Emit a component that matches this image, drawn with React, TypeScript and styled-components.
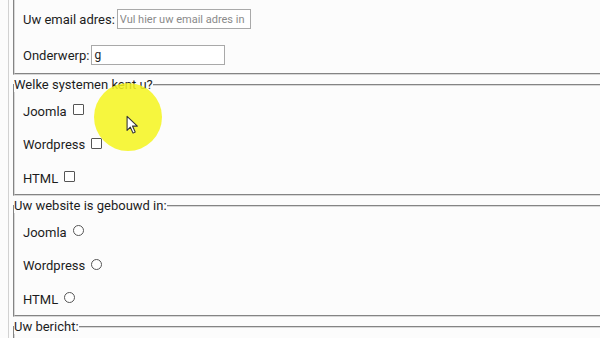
import React from 'react';
import styled, { createGlobalStyle } from 'styled-components';

const GlobalStyle = createGlobalStyle`
  html, body {
    margin: 0;
    padding: 0;
    background: #fcfcfc;
    overflow: hidden;
  }
  body {
    font-family: Roboto, "Liberation Sans", sans-serif;
    font-size: 13px;
    color: #1c1c1c;
  }
`;

const Page = styled.div`
  position: relative;
  width: 600px;
  height: 338px;
  overflow: hidden;
  padding-left: 8px;
  box-sizing: border-box;
`;

const Form = styled.form`
  border-left: 1px solid #d2d2d2;
  padding-left: 4px;
  height: 100%;
  display: flex;
  flex-direction: column;
  gap: 2px;
`;

const TopSection = styled.div`
  border: 2px groove #d8d8d8;
  border-top: none;
  border-right: none;
  padding: 9px 0 8px 8px;
  display: flex;
  flex-direction: column;
  gap: 16px;
`;

const Fieldset = styled.fieldset`
  margin: 0;
  padding: 0;
  border: 2px groove #d8d8d8;
  border-right: none;
  min-width: 0;
  flex-shrink: 0;
`;

const Legend = styled.legend`
  padding: 0;
  margin-left: -1px;
  line-height: 15px;
`;

const Rows = styled.div`
  display: flex;
  flex-direction: column;
  gap: 13.5px;
  padding: 9px 0 6px 8px;
`;

const Row = styled.label`
  display: flex;
  align-items: center;
  height: 20px;
  gap: 6px;
`;

const TextRow = styled(Row)`
  gap: 2px;
`;

const TextInput = styled.input`
  width: 134px;
  height: 20px;
  box-sizing: border-box;
  border: 1px solid #a9a9a9;
  padding: 0 2px;
  font-family: Roboto, "Liberation Sans", sans-serif;
  font-size: 12px;
  color: #222;
  background: #fff;
  outline: none;
  &::placeholder {
    color: #8a8a8a;
    font-size: 11px;
  }
`;

type BoxProps = { $round?: boolean };

const Choice = styled.input<BoxProps>`
  appearance: none;
  margin: 0;
  width: 11px;
  height: 11px;
  box-sizing: border-box;
  border: 1px solid #555;
  border-radius: ${props => (props.$round ? '50%' : '1px')};
  background: #fff;
  margin-top: -3px;
`;

const Highlight = styled.div`
  position: absolute;
  left: 94px;
  top: 83px;
  width: 68px;
  height: 68px;
  border-radius: 50%;
  background: rgba(244, 244, 30, 0.86);
  pointer-events: none;
`;

const Cursor = styled.svg`
  position: absolute;
  left: 126px;
  top: 115px;
  pointer-events: none;
`;

const systems = ['Joomla', 'Wordpress', 'HTML'];

const App = (): JSX.Element => {
  return (
    <Page>
      <GlobalStyle />
      <Form>
        <TopSection>
          <TextRow>
            Uw email adres:
            <TextInput placeholder="Vul hier uw email adres in" />
          </TextRow>
          <TextRow>
            Onderwerp:
            <TextInput defaultValue="g" />
          </TextRow>
        </TopSection>

        <Fieldset>
          <Legend>Welke systemen kent u?</Legend>
          <Rows>
            {systems.map(name => (
              <Row key={name}>
                {name}
                <Choice type="checkbox" />
              </Row>
            ))}
          </Rows>
        </Fieldset>

        <Fieldset>
          <Legend>Uw website is gebouwd in:</Legend>
          <Rows>
            {systems.map(name => (
              <Row key={name}>
                {name}
                <Choice type="radio" name="cms" $round />
              </Row>
            ))}
          </Rows>
        </Fieldset>

        <Fieldset>
          <Legend>Uw bericht:</Legend>
          <Rows />
        </Fieldset>
      </Form>

      <Highlight />
      <Cursor width="13" height="20" viewBox="0 0 12 18">
        <path
          d="M1 1 L1 14 L4 11 L6.5 16.5 L8.5 15.5 L6 10 L10.5 10 Z"
          fill="#fff"
          stroke="#333"
          strokeWidth="1"
          strokeLinejoin="round"
        />
      </Cursor>
    </Page>
  );
};

export default App;
